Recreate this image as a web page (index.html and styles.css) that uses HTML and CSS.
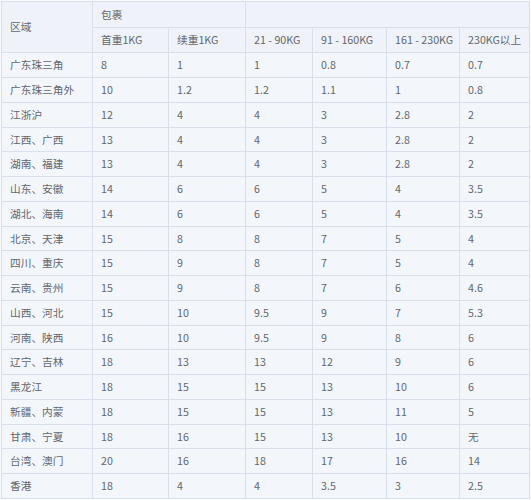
FILE: index.html
```html
<!DOCTYPE html>
<html lang="zh-CN">
<head>
<meta charset="utf-8">
<title>运费表</title>
<link rel="stylesheet" href="styles.css">
</head>
<body>
<table class="rates">
  <colgroup>
    <col class="c-region"><col class="c-first"><col class="c-next"><col class="c-a"><col class="c-b"><col class="c-c"><col class="c-d">
  </colgroup>
  <thead>
    <tr class="h1">
      <th rowspan="2">区域</th>
      <th colspan="2">包裹</th>
      <th colspan="4"></th>
    </tr>
    <tr class="h2">
      <th>首重1KG</th><th>续重1KG</th><th>21 - 90KG</th><th>91 - 160KG</th><th>161 - 230KG</th><th>230KG以上</th>
    </tr>
  </thead>
  <tbody>
    <tr><td>广东珠三角</td><td>8</td><td>1</td><td>1</td><td>0.8</td><td>0.7</td><td>0.7</td></tr>
    <tr><td>广东珠三角外</td><td>10</td><td>1.2</td><td>1.2</td><td>1.1</td><td>1</td><td>0.8</td></tr>
    <tr><td>江浙沪</td><td>12</td><td>4</td><td>4</td><td>3</td><td>2.8</td><td>2</td></tr>
    <tr><td>江西、广西</td><td>13</td><td>4</td><td>4</td><td>3</td><td>2.8</td><td>2</td></tr>
    <tr><td>湖南、福建</td><td>13</td><td>4</td><td>4</td><td>3</td><td>2.8</td><td>2</td></tr>
    <tr><td>山东、安徽</td><td>14</td><td>6</td><td>6</td><td>5</td><td>4</td><td>3.5</td></tr>
    <tr><td>湖北、海南</td><td>14</td><td>6</td><td>6</td><td>5</td><td>4</td><td>3.5</td></tr>
    <tr><td>北京、天津</td><td>15</td><td>8</td><td>8</td><td>7</td><td>5</td><td>4</td></tr>
    <tr><td>四川、重庆</td><td>15</td><td>9</td><td>8</td><td>7</td><td>5</td><td>4</td></tr>
    <tr><td>云南、贵州</td><td>15</td><td>9</td><td>8</td><td>7</td><td>6</td><td>4.6</td></tr>
    <tr><td>山西、河北</td><td>15</td><td>10</td><td>9.5</td><td>9</td><td>7</td><td>5.3</td></tr>
    <tr><td>河南、陕西</td><td>16</td><td>10</td><td>9.5</td><td>9</td><td>8</td><td>6</td></tr>
    <tr><td>辽宁、吉林</td><td>18</td><td>13</td><td>13</td><td>12</td><td>9</td><td>6</td></tr>
    <tr><td>黑龙江</td><td>18</td><td>15</td><td>15</td><td>13</td><td>10</td><td>6</td></tr>
    <tr><td>新疆、内蒙</td><td>18</td><td>15</td><td>15</td><td>13</td><td>11</td><td>5</td></tr>
    <tr><td>甘肃、宁夏</td><td>18</td><td>16</td><td>15</td><td>13</td><td>10</td><td>无</td></tr>
    <tr><td>台湾、澳门</td><td>20</td><td>16</td><td>18</td><td>17</td><td>16</td><td>14</td></tr>
    <tr><td>香港</td><td>18</td><td>4</td><td>4</td><td>3.5</td><td>3</td><td>2.5</td></tr>
  </tbody>
</table>
</body>
</html>
```
FILE: styles.css
```css
html, body {
  margin: 0;
  padding: 0;
  background: #f8fafd;
}
body {
  padding: 1px 0 0 1px;
  font-family: "Noto Sans CJK SC", "Noto Sans", sans-serif;
  font-size: 10.7px;
  color: #62666c;
}
.rates {
  border-collapse: collapse;
  table-layout: fixed;
  width: 529px;
  background: #f3f7fc;
}
.c-region { width: 91px; }
.c-first { width: 76px; }
.c-next { width: 77px; }
.c-a { width: 67px; }
.c-b { width: 74px; }
.c-c { width: 73px; }
.c-d { width: 70px; }
.rates th, .rates td {
  border: 1px solid #d8e0eb;
  padding: 0 0 0 8px;
  text-align: left;
  font-weight: normal;
  vertical-align: middle;
  white-space: nowrap;
  line-height: 14px;
}
.rates th {
  background: #eff3f9;
}
.h1 th { height: 25px; }
.h2 th { height: 24px; }
.rates td { height: 24px; }
.rates tbody tr:nth-child(4n) td { height: 23px; }
```
